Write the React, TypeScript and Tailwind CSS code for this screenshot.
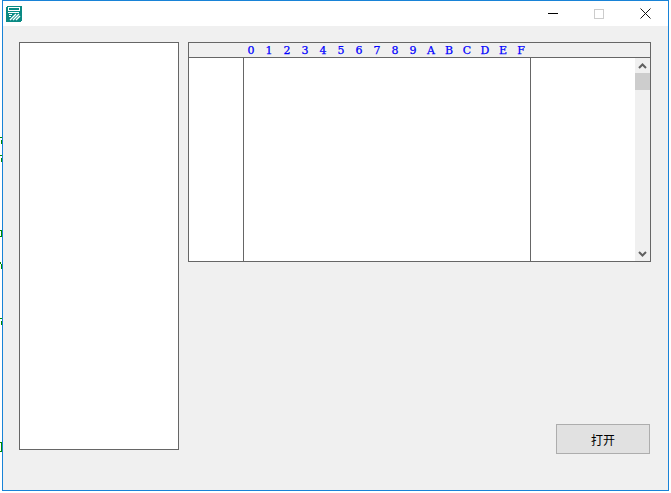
const hexDigits = ["0", "1", "2", "3", "4", "5", "6", "7", "8", "9", "A", "B", "C", "D", "E", "F"];

const AppIcon = () => (
  <svg width="16" height="16" viewBox="0 0 16 16" shapeRendering="crispEdges">
    <rect x="0" y="0" width="16" height="16" rx="2" fill="#0a8a84" />
    <rect x="2.5" y="1.5" width="11" height="3" fill="#0a8a84" stroke="#ffffff" strokeWidth="1" />
    <path d="M2 6.5h11M3 8.5h3M3 10.5h2" stroke="#ffffff" strokeWidth="1" />
    <path d="M4 14L10 8M7 14L13 8M10 14L14 10" stroke="#ffffff" strokeWidth="1.4" shapeRendering="auto" />
  </svg>
);

const WindowButtons = () => (
  <div className="flex items-center h-full">
    <div className="w-[46px] flex justify-center">
      <div className="w-[10px] h-px bg-black" />
    </div>
    <div className="w-[46px] flex justify-center">
      <div className="w-[10px] h-[10px] border border-[#cccccc]" />
    </div>
    <div className="w-[46px] flex justify-center">
      <svg width="11" height="11" viewBox="0 0 11 11">
        <path d="M0.5 0.5L10.5 10.5M10.5 0.5L0.5 10.5" stroke="#111111" strokeWidth="1" fill="none" />
      </svg>
    </div>
  </div>
);

// bits of the window behind, peeking past the left edge
const BehindStrip = () => (
  <svg className="w-[2px] h-[493px] shrink-0" viewBox="0 0 2 493" shapeRendering="crispEdges">
    <path d="M0 137h2v1h-2zM1 140h1v4h-1zM0 155h2v1h-2zM1 158h1v4h-1zM0 230h2v1h-2zM1 231h1v5h-1zM0 236h2v1h-2zM0 262h1v2h-1zM1 264h1v5h-1zM0 318h2v1h-2zM1 321h1v4h-1zM0 442h2v1h-2zM1 443h1v8h-1zM0 451h2v1h-2z" fill="#008a00" />
  </svg>
);

const Scrollbar = () => (
  <div className="w-[15px] h-full bg-[#f0f0f0] flex flex-col">
    <div className="h-[15px] flex items-center justify-center">
      <svg width="9" height="6" viewBox="0 0 9 6">
        <path d="M1 5L4.5 1.5L8 5" stroke="#606060" strokeWidth="2" fill="none" />
      </svg>
    </div>
    <div className="h-[17px] bg-[#cdcdcd]" />
    <div className="flex-1" />
    <div className="h-[15px] flex items-center justify-center">
      <svg width="9" height="6" viewBox="0 0 9 6">
        <path d="M1 1L4.5 4.5L8 1" stroke="#606060" strokeWidth="2" fill="none" />
      </svg>
    </div>
  </div>
);

const App = () => {
  return (
    <div className="w-[671px] h-[493px] bg-white flex overflow-hidden">
      <BehindStrip />
      <div className="w-[667px] h-[491px] border border-[#1883d7] flex flex-col">
        {/* Title bar */}
        <div className="h-[25px] bg-white flex items-center justify-between shrink-0">
          <div className="pl-[3px]">
            <AppIcon />
          </div>
          <WindowButtons />
        </div>

        {/* Client area */}
        <div className="flex-1 bg-[#f0f0f0] flex pl-4 pr-[17px] pt-4">
          <div className="w-[160px] h-[408px] bg-white border border-[#666666] shrink-0" />

          <div className="ml-[9px] flex-1 flex flex-col">
            <div className="h-[220px] border border-[#666666] flex flex-col">
              <div className="h-[14px] bg-[#f0f0f0] border-b border-[#666666] box-content flex pl-[53px] shrink-0">
                {hexDigits.map((d) => (
                  <span
                    key={d}
                    className="w-[18px] text-center text-[11px] leading-[16px] text-[#0000ff] [-webkit-text-stroke:0.25px_#0000ff] font-['DejaVu_Serif',serif]"
                  >
                    {d}
                  </span>
                ))}
              </div>
              <div className="flex-1 min-h-0 flex bg-white">
                <div className="w-[54px] border-r border-[#666666] box-content" />
                <div className="w-[286px] border-r border-[#666666] box-content" />
                <div className="flex-1" />
                <Scrollbar />
              </div>
            </div>

            <div className="mt-[162px] pr-px flex justify-end">
              <button className="w-[94px] h-[30px] pt-px bg-[#e1e1e1] border border-[#adadad] text-[12px] text-black font-['Noto_Sans_CJK_SC',sans-serif]">
                打开
              </button>
            </div>
          </div>
        </div>
      </div>
    </div>
  );
};

export default App;
